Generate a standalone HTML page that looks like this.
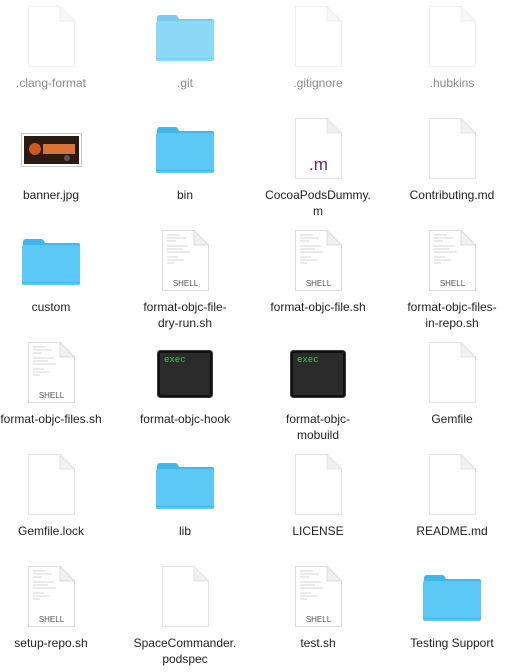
<!DOCTYPE html>
<html><head><meta charset="utf-8"><style>
body{margin:0;width:518px;height:672px;background:#fff;position:relative;overflow:hidden;font-family:"Liberation Sans",sans-serif;}
.c{position:absolute;width:134px;height:112px;}
.ic{position:absolute;left:50%;}
.lb{position:absolute;left:-20px;right:-20px;top:75px;text-align:center;font-size:12px;line-height:16px;color:#222;white-space:nowrap;}
.f .lb{color:#8a8a8a}
.f .ic{opacity:.55}
</style></head><body>
<svg width="0" height="0" style="position:absolute">
<defs>
<symbol id="doc" viewBox="0 0 47 61"><path d="M0.5 0.5H32L46.5 15V60.5H0.5Z" fill="#fff" stroke="#e3e3e3"/><path d="M32 0.5V15H46.5Z" fill="#f0f0f0" stroke="#e3e3e3"/></symbol>
<symbol id="fold" viewBox="0 0 60 48"><path d="M2 4Q2 1 5 1H20Q22 1 23 3L24 5H57Q59 5 59 7V45Q59 47 57 47H3Q1 47 1 45Z" fill="#3fb7ec"/><path d="M1 9Q1 7 3 7H57Q59 7 59 9V45Q59 47 57 47H3Q1 47 1 45Z" fill="#5cc8f5"/><rect x="1" y="44" width="58" height="1" fill="#47b4e6"/></symbol>
<symbol id="sh" viewBox="0 0 47 61"><path d="M0.5 0.5H32L46.5 15V60.5H0.5Z" fill="#fff" stroke="#dcdcdc"/><path d="M32 0.5V15H46.5Z" fill="#f0f0f0" stroke="#dcdcdc"/>
<g stroke="#c8c8c8" stroke-width=".7"><path d="M5 5H18M5 8H24M5 11H14M5 16H26M5 19H20M5 22H28M5 27H16M5 30H22M5 33H12"/></g>
<text x="23.5" y="56" font-size="8" text-anchor="middle" fill="#555" font-family="Liberation Sans">SHELL</text></symbol>
<symbol id="ex" viewBox="0 0 56 48"><rect x="0" y="0" width="56" height="48" rx="4" fill="#111" stroke="#777" stroke-width=".8"/><rect x="3" y="3" width="50" height="42" fill="#2b2b2b"/><text x="7" y="12" font-size="9" fill="#3ec45a" font-family="Liberation Mono">exec</text></symbol>
</defs></svg>

<div class="c f" style="left:-16px;top:0"><svg class="ic" style="margin-left:-23px;top:6px" width="47" height="61"><use href="#doc"/></svg><div class="lb">.clang-format</div></div>
<div class="c f" style="left:118px;top:0"><svg class="ic" style="margin-left:-30px;top:14px;opacity:.7" width="60" height="48"><use href="#fold"/></svg><div class="lb">.git</div></div>
<div class="c f" style="left:251px;top:0"><svg class="ic" style="margin-left:-23px;top:6px" width="47" height="61"><use href="#doc"/></svg><div class="lb">.gitignore</div></div>
<div class="c f" style="left:385px;top:0"><svg class="ic" style="margin-left:-23px;top:6px" width="47" height="61"><use href="#doc"/></svg><div class="lb">.hubkins</div></div>

<div class="c" style="left:-16px;top:112px"><svg class="ic" style="margin-left:-30px;top:21px" width="61" height="34"><rect x=".5" y=".5" width="60" height="33" fill="#fff" stroke="#ccc"/><rect x="3" y="3" width="55" height="28" fill="#2a1a12"/><circle cx="14" cy="16" r="6" fill="#c85a1e"/><rect x="22" y="11" width="32" height="10" fill="#d8743a"/><circle cx="46" cy="25" r="3" fill="#556"/></svg><div class="lb">banner.jpg</div></div>
<div class="c" style="left:118px;top:112px"><svg class="ic" style="margin-left:-30px;top:14px" width="60" height="48"><use href="#fold"/></svg><div class="lb">bin</div></div>
<div class="c" style="left:251px;top:112px"><svg class="ic" style="margin-left:-23px;top:6px" width="47" height="61"><use href="#doc"/><text x="23.5" y="52" font-size="17" text-anchor="middle" fill="#5b2a8a" font-family="Liberation Sans">.m</text></svg><div class="lb">CocoaPodsDummy.<br>m</div></div>
<div class="c" style="left:385px;top:112px"><svg class="ic" style="margin-left:-23px;top:6px" width="47" height="61"><use href="#doc"/></svg><div class="lb">Contributing.md</div></div>

<div class="c" style="left:-16px;top:224px"><svg class="ic" style="margin-left:-30px;top:14px" width="60" height="48"><use href="#fold"/></svg><div class="lb">custom</div></div>
<div class="c" style="left:118px;top:224px"><svg class="ic" style="margin-left:-23px;top:6px" width="47" height="61"><use href="#sh"/></svg><div class="lb">format-objc-file-<br>dry-run.sh</div></div>
<div class="c" style="left:251px;top:224px"><svg class="ic" style="margin-left:-23px;top:6px" width="47" height="61"><use href="#sh"/></svg><div class="lb">format-objc-file.sh</div></div>
<div class="c" style="left:385px;top:224px"><svg class="ic" style="margin-left:-23px;top:6px" width="47" height="61"><use href="#sh"/></svg><div class="lb">format-objc-files-<br>in-repo.sh</div></div>

<div class="c" style="left:-16px;top:336px"><svg class="ic" style="margin-left:-23px;top:6px" width="47" height="61"><use href="#sh"/></svg><div class="lb">format-objc-files.sh</div></div>
<div class="c" style="left:118px;top:336px"><svg class="ic" style="margin-left:-28px;top:14px" width="56" height="48"><use href="#ex"/></svg><div class="lb">format-objc-hook</div></div>
<div class="c" style="left:251px;top:336px"><svg class="ic" style="margin-left:-28px;top:14px" width="56" height="48"><use href="#ex"/></svg><div class="lb">format-objc-<br>mobuild</div></div>
<div class="c" style="left:385px;top:336px"><svg class="ic" style="margin-left:-23px;top:6px" width="47" height="61"><use href="#doc"/></svg><div class="lb">Gemfile</div></div>

<div class="c" style="left:-16px;top:448px"><svg class="ic" style="margin-left:-23px;top:6px" width="47" height="61"><use href="#doc"/></svg><div class="lb">Gemfile.lock</div></div>
<div class="c" style="left:118px;top:448px"><svg class="ic" style="margin-left:-30px;top:14px" width="60" height="48"><use href="#fold"/></svg><div class="lb">lib</div></div>
<div class="c" style="left:251px;top:448px"><svg class="ic" style="margin-left:-23px;top:6px" width="47" height="61"><use href="#doc"/></svg><div class="lb">LICENSE</div></div>
<div class="c" style="left:385px;top:448px"><svg class="ic" style="margin-left:-23px;top:6px" width="47" height="61"><use href="#doc"/></svg><div class="lb">README.md</div></div>

<div class="c" style="left:-16px;top:560px"><svg class="ic" style="margin-left:-23px;top:6px" width="47" height="61"><use href="#sh"/></svg><div class="lb">setup-repo.sh</div></div>
<div class="c" style="left:118px;top:560px"><svg class="ic" style="margin-left:-23px;top:6px" width="47" height="61"><use href="#doc"/></svg><div class="lb">SpaceCommander.<br>podspec</div></div>
<div class="c" style="left:251px;top:560px"><svg class="ic" style="margin-left:-23px;top:6px" width="47" height="61"><use href="#sh"/></svg><div class="lb">test.sh</div></div>
<div class="c" style="left:385px;top:560px"><svg class="ic" style="margin-left:-30px;top:14px" width="60" height="48"><use href="#fold"/></svg><div class="lb">Testing Support</div></div>
</body></html>
